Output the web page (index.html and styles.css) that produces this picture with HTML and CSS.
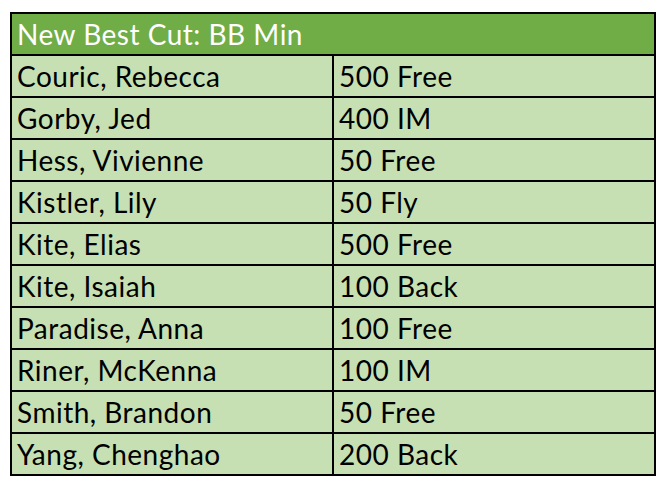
FILE: index.html
```html
<!DOCTYPE html>
<html lang="en">
<head>
<meta charset="utf-8">
<title>New Best Cut: BB Min</title>
<link rel="stylesheet" href="styles.css">
</head>
<body>
<div class="sheet">
  <div class="cell head">New Best Cut: BB Min</div>
  <div class="cell">Couric, Rebecca</div><div class="cell">500 Free</div>
  <div class="cell">Gorby, Jed</div><div class="cell">400 IM</div>
  <div class="cell">Hess, Vivienne</div><div class="cell">50 Free</div>
  <div class="cell">Kistler, Lily</div><div class="cell">50 Fly</div>
  <div class="cell">Kite, Elias</div><div class="cell">500 Free</div>
  <div class="cell">Kite, Isaiah</div><div class="cell">100 Back</div>
  <div class="cell">Paradise, Anna</div><div class="cell">100 Free</div>
  <div class="cell">Riner, McKenna</div><div class="cell">100 IM</div>
  <div class="cell">Smith, Brandon</div><div class="cell">50 Free</div>
  <div class="cell">Yang, Chenghao</div><div class="cell">200 Back</div>
</div>
</body>
</html>
```
FILE: styles.css
```css
html, body {
  margin: 0;
  background: #ffffff;
}
body {
  padding: 12px 0 0 10px;
  font-family: Lato, "Liberation Sans", sans-serif;
}
.sheet {
  display: grid;
  grid-template-columns: 320px 320px;
  grid-auto-rows: 40px;
  gap: 2px;
  padding: 2px;
  background: #000;
  width: max-content;
}
.cell {
  background: #c6e0b4;
  color: #000;
  font-size: 28px;
  letter-spacing: 0.5px;
  line-height: 40px;
  padding-left: 5px;
  white-space: nowrap;
  overflow: hidden;
}
.head {
  grid-column: 1 / span 2;
  background: #70ad47;
  color: #fff;
}
```
